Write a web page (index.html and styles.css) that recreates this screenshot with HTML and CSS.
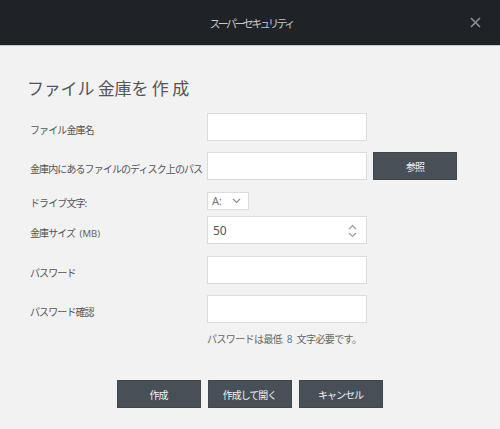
FILE: index.html
```html
<!DOCTYPE html>
<html lang="ja">
<head>
<meta charset="utf-8">
<link rel="stylesheet" href="styles.css">
</head>
<body>
<div class="dialog">
  <header class="titlebar">
    <span class="titlebar-text">スーパーセキュリティ</span>
    <span class="close">
      <svg width="11" height="11" viewBox="0 0 11 11"><path d="M1 1L10 10M10 1L1 10" stroke="#8b9197" stroke-width="1.6" fill="none"/></svg>
    </span>
  </header>
  <main class="content">
    <h1 class="heading">ファイル 金庫を 作 成</h1>
    <div class="form">
      <div class="row r1">
        <label class="label">ファイル金庫名</label>
        <div class="input"></div>
      </div>
      <div class="row r2">
        <label class="label">金庫内にあるファイルのディスク上のパス</label>
        <div class="input"></div>
        <button class="btn browse">参照</button>
      </div>
      <div class="row r3">
        <label class="label">ドライブ文字:</label>
        <div class="select"><span>A:</span>
          <svg width="9" height="6" viewBox="0 0 9 6"><path d="M1 1L4.5 4.5L8 1" stroke="#8f8f8f" stroke-width="1.2" fill="none"/></svg>
        </div>
      </div>
      <div class="row r4">
        <label class="label">金庫サイズ <span class="unit">(MB)</span></label>
        <div class="input number"><span>50</span>
          <svg class="spin" width="9" height="14" viewBox="0 0 9 14"><path d="M1 5L4.5 1.5L8 5M1 9L4.5 12.5L8 9" stroke="#9a9a9a" stroke-width="1.1" fill="none"/></svg>
        </div>
      </div>
      <div class="row r5">
        <label class="label">パスワード</label>
        <div class="input"></div>
      </div>
      <div class="row r6">
        <label class="label">パスワード確認</label>
        <div class="input"></div>
      </div>
      <div class="row hint-row">
        <span class="label"></span>
        <p class="hint">パスワードは最低 <span class="num">8</span> 文字必要です。</p>
      </div>
    </div>
    <div class="actions">
      <button class="btn">作成</button>
      <button class="btn">作成して開く</button>
      <button class="btn">キャンセル</button>
    </div>
  </main>
</div>
</body>
</html>
```
FILE: styles.css
```css
* { box-sizing: border-box; margin: 0; padding: 0; }
html, body { width: 500px; height: 429px; overflow: hidden; }
body {
  background: #f2f2f2;
  font-family: "Noto Sans CJK JP", "Noto Sans", sans-serif;
  color: #555;
}
.dialog { width: 500px; height: 429px; display: flex; flex-direction: column; }
.titlebar {
  height: 46px;
  background: #1f2226;
  border-bottom: 1px solid #c9c9c9;
  display: flex;
  align-items: center;
  justify-content: center;
  position: relative;
}
.titlebar-text { color: #c6c8ca; font-size: 11px; letter-spacing: -2.6px; margin-left: 2px; }
.close { position: absolute; right: 19px; top: 17px; display: flex; }
.content { padding: 0 0 0 27px; flex: 1; display: flex; flex-direction: column; }
.heading {
  font-size: 17px;
  font-weight: normal;
  color: #555;
  letter-spacing: -0.2px;
  margin-top: 29px;
  line-height: 26px;
  height: 26px;
}
.form { display: flex; flex-direction: column; margin-top: 12px; padding-left: 3px; }
.row { display: flex; align-items: center; }
.label { width: 177px; font-size: 10px; color: #555; padding-top: 4px; letter-spacing: -0.9px; word-spacing: 3px; white-space: nowrap; }
.unit { font-family: "Noto Sans", sans-serif; font-size: 9.5px; color: #666; letter-spacing: 0; }
.input {
  width: 160px; height: 28px; background: #fff; border: 1px solid #dcdcdc;
  display: flex; align-items: center; justify-content: space-between; padding: 0 9px 0 5px;
}
.number span { font-size: 12px; color: #555; font-family: "Noto Sans", sans-serif; }
.spin { margin-top: 1px; }
.r2, .r3, .r5, .r6 { margin-top: 11px; }
.r4 { margin-top: 6px; }
.r5 { margin-top: 12px; }
.select {
  width: 42px; height: 18px; background: #fff; border: 1px solid #dcdcdc;
  display: flex; align-items: center; justify-content: space-between; padding: 0 7px 0 4px;
  font-size: 11px; color: #777; font-family: "Noto Sans", sans-serif;
}
.btn {
  width: 84px; height: 28px; background: #474f57; border: 1px solid #3f464d;
  color: #f2f2f2; font-size: 10px; font-family: "Noto Sans CJK JP", sans-serif;
  letter-spacing: -1px;
}
.browse { margin-left: 6px; }
.hint-row { margin-top: 8px; }
.hint { font-size: 10px; color: #666; letter-spacing: -0.6px; word-spacing: 3px; line-height: 16px; }
.num { color: #5a7ea8; font-family: "Noto Sans", sans-serif; }
.actions { display: flex; gap: 7px; justify-content: center; margin-top: 33px; padding-right: 27px; margin-left: -1px; }
```
